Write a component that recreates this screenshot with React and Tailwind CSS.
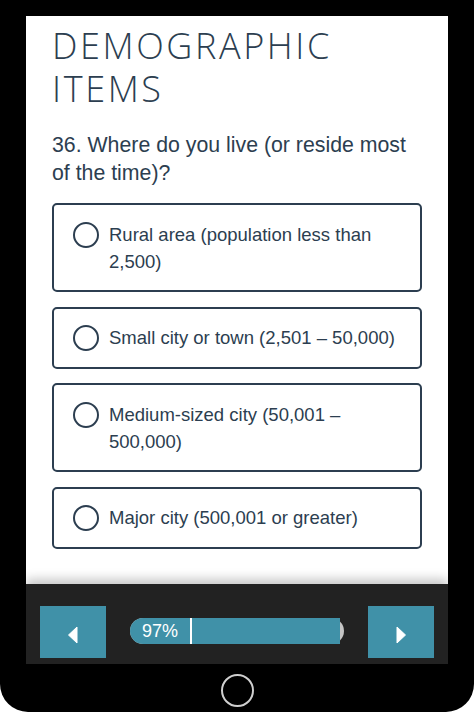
const options = [
  "Rural area (population less than 2,500)",
  "Small city or town (2,501 – 50,000)",
  "Medium-sized city (50,001 – 500,000)",
  "Major city (500,001 or greater)",
];

function Arrow({ dir }) {
  return (
    <svg width="12" height="18" viewBox="0 0 12 18" className="mt-[6px]">
      {dir === "left" ? (
        <polygon points="1.5,9 10,1 10,17" fill="#fff" stroke="#fff" strokeWidth="1" strokeLinejoin="round" />
      ) : (
        <polygon points="10.5,9 2,1 2,17" fill="#fff" stroke="#fff" strokeWidth="1" strokeLinejoin="round" />
      )}
    </svg>
  );
}

function Option({ label }) {
  return (
    <label className="flex items-start gap-[10px] rounded-[5px] border-2 border-[#2c3e50] px-[19px] py-[15.5px] cursor-pointer">
      <span className="mt-[1px] h-[26px] w-[26px] shrink-0 rounded-full border-[2.5px] border-[#2c3e50]" />
      <span className="text-[18.5px] leading-[27px] text-[#2c3e50]">{label}</span>
    </label>
  );
}

export default function App() {
  return (
    <div
      className="flex h-[712px] w-[474px] flex-col overflow-hidden rounded-b-[28px] bg-black"
      style={{ fontFamily: '"Liberation Sans", Arial, sans-serif' }}
    >
      <div className="mx-[26px] mt-[16px] flex flex-col">
        {/* survey page */}
        <div className="h-[568px] overflow-hidden bg-white px-[26px] pt-[8px]">
          <h1
            className="text-[36px] leading-[43px] font-light tracking-[2.6px] text-[#2c3e50]"
            style={{ fontFamily: '"Open Sans", sans-serif' }}
          >
            DEMOGRAPHIC
            <br />
            ITEMS
          </h1>
          <p className="mt-[21px] text-[21.3px] leading-[28px] text-[#2c3e50]">
            36. Where do you live (or reside most of the time)?
          </p>
          <div className="mt-[16px] flex flex-col gap-[14.5px]">
            {options.map((o) => (
              <Option key={o} label={o} />
            ))}
          </div>
        </div>

        {/* nav bar */}
        <div className="relative z-10 flex h-[80px] items-start gap-[24px] bg-[#222222] px-[14px] pt-[22px] shadow-[0_-5px_10px_rgba(0,0,0,0.22)]">
          <button className="flex h-[52px] w-[66px] items-center justify-center bg-[#4091a8]">
            <Arrow dir="left" />
          </button>
          <div className="mt-[12px] h-[26px] w-[214px] rounded-full bg-[#c4c4c4]">
            <div className="flex h-full w-[210px] items-stretch rounded-l-full bg-[#4091a8]">
              <span className="pl-[12px] text-[18px] leading-[26px] text-white">97%</span>
              <span className="ml-[12px] w-[2px] bg-white" />
            </div>
          </div>
          <button className="flex h-[52px] w-[66px] items-center justify-center bg-[#4091a8]">
            <Arrow dir="right" />
          </button>
        </div>
      </div>

      {/* home button */}
      <div className="flex flex-1 justify-center pt-[10px]">
        <div className="h-[33px] w-[33px] rounded-full border-2 border-[#cfcfcf]" />
      </div>
    </div>
  );
}
